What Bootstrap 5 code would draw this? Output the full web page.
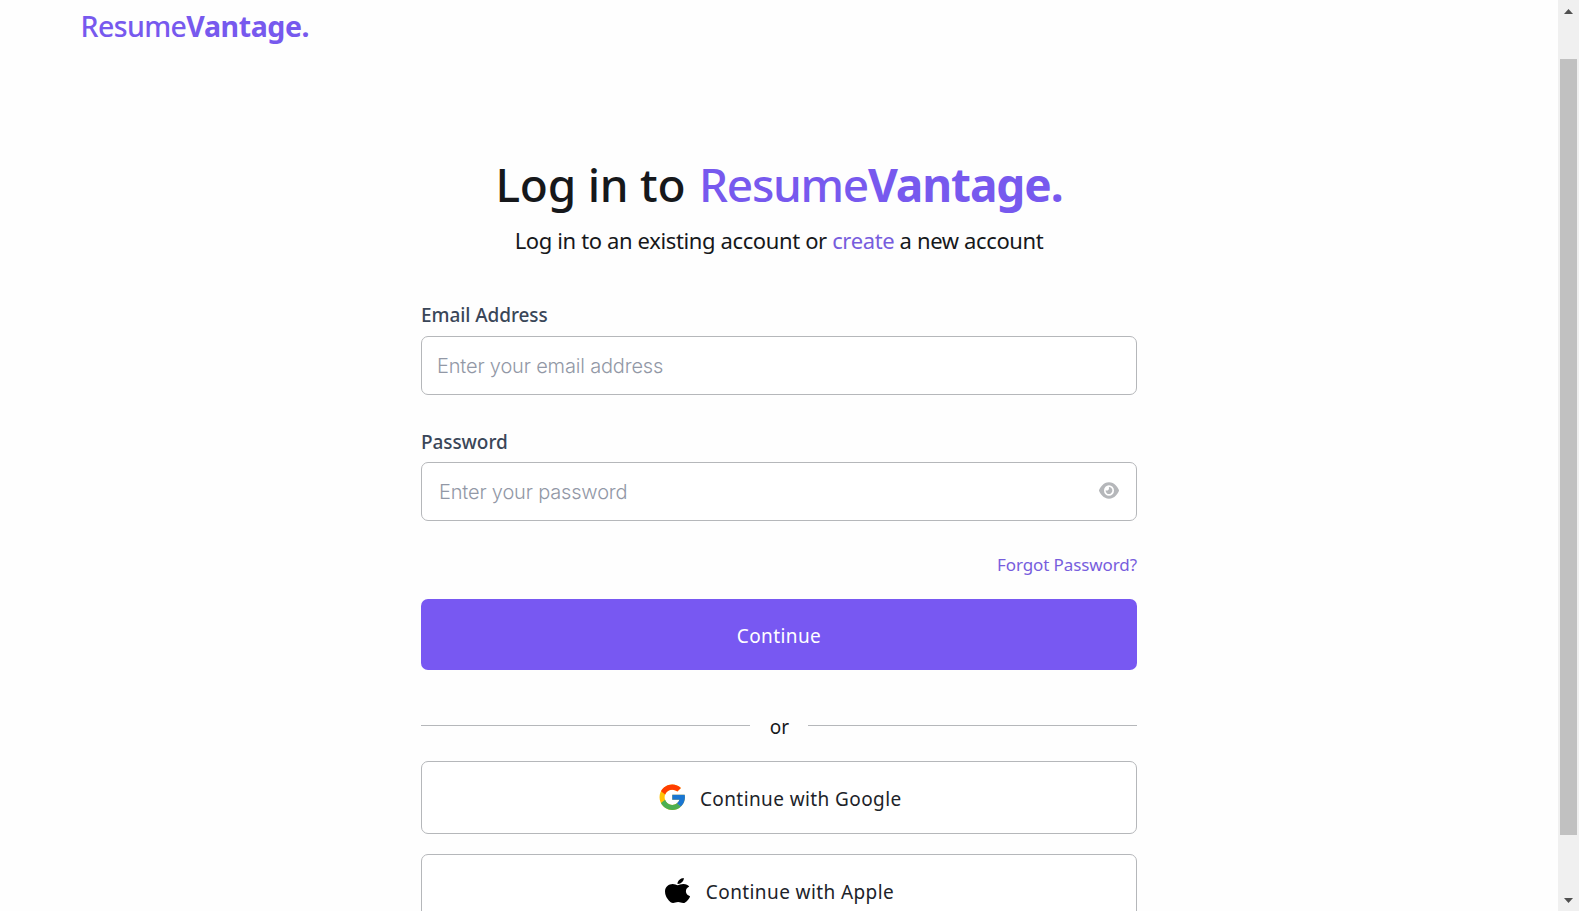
<!DOCTYPE html>
<html lang="en">
<head>
<meta charset="utf-8">
<meta name="viewport" content="width=device-width, initial-scale=1">
<title>ResumeVantage - Log in</title>
<link href="https://cdn.jsdelivr.net/npm/bootstrap@5.3.0/dist/css/bootstrap.min.css" rel="stylesheet">
<style>
  :root { --brand: #7858f2; --line: #b5b7ba; }
  body { font-family: "Noto Sans", sans-serif; color: #16181b; background: #fefefe; }
  a { color: #775ddd; text-decoration: none; }
  .page { height: 911px; }
  .brand-name { color: #7759ee; }
  .site-logo { padding: 5px 0 0 80.5px; height: 60px; font-size: 28.5px; line-height: 42px; letter-spacing: -.4px; }
  .login { width: 716px; }
  .login-title { margin: 91px 0 0; font-size: 46px; line-height: 66px; font-weight: 500; letter-spacing: -.25px; white-space: nowrap; }
  .login-title .brand-name { letter-spacing: -1.1px; margin-left: 2px; }
  .brand-light { font-weight: 500; }
  .login-title .brand-light { letter-spacing: -1.3px; }
  .site-logo .brand-light { letter-spacing: -.6px; }
  .login-sub { font-size: 22px; line-height: 32px; letter-spacing: -.37px; margin: 7px 0 0; }
  .field-label { font-size: 19px; line-height: 28px; font-weight: 500; letter-spacing: -.08px; color: #3a4658; margin: 0; }
  .field { height: 59px; border: 1px solid var(--line); border-radius: 7px; font-family: Inter, sans-serif; font-size: 20px; font-weight: 300; letter-spacing: -.17px; background: #fff; padding: 0 15px; }
  .field::placeholder { color: #9298a6; opacity: 1; }
  .field-password { padding-left: 17px; }
  .eye { right: 18px; top: 19.5px; line-height: 0; padding: 0; border: 0; background: none; }
  .forgot { font-size: 17px; line-height: 26px; letter-spacing: -.1px; }
  .btn-wide { border-radius: 7px; font-size: 19px; letter-spacing: .4px; line-height: 28px; }
  .btn-main, .btn-main:hover { height: 71px; background: var(--brand); color: #fff; padding: 2px 0 0; }
  .or-row { height: 28px; font-size: 19px; }
  .or-row hr { margin: 0; border-color: var(--line); opacity: 1; }
  .or-row span { width: 58px; line-height: 28px; padding: 4px 0 0 1px; }
  .btn-social { height: 73px; flex: none; border: 1px solid var(--line); background: #fff; padding: 2px 0 0 1px; color: #202329; }
  .track { width: 21px; background: #f0f0f0; }
  .thumb { width: 17px; height: 776px; background: #c1c1c1; margin-top: 45px; }
</style>
</head>
<body class="overflow-hidden">
<div class="page d-flex overflow-hidden">
  <main class="flex-grow-1 overflow-hidden">
    <header class="site-logo brand-name"><span class="brand-light">Resume</span><b>Vantage.</b></header>
    <section class="login mx-auto d-flex flex-column">
      <h1 class="login-title text-center">Log in to <span class="brand-name"><span class="brand-light">Resume</span><b>Vantage.</b></span></h1>
      <p class="login-sub text-center">Log in to an existing account or <a href="#">create</a> a new account</p>
      <form class="d-flex flex-column">
        <label class="field-label" for="email" style="margin-top:45px">Email Address</label>
        <input class="field form-control" id="email" type="email" placeholder="Enter your email address" style="margin-top:7px">
        <label class="field-label" for="password" style="margin-top:33px">Password</label>
        <div class="position-relative" style="margin-top:6px">
          <input class="field field-password form-control" id="password" type="password" placeholder="Enter your password">
          <button class="eye position-absolute" type="button" aria-label="Show password">
            <svg width="20" height="17" viewBox="0 24 576 464" preserveAspectRatio="none" fill="#b5b7ba"><path d="M288 32c-80.8 0-145.5 36.8-192.6 80.6C48.6 156 17.3 208 2.5 243.7c-3.3 7.9-3.3 16.7 0 24.6C17.3 304 48.6 356 95.4 399.4C142.5 443.2 207.2 480 288 480s145.5-36.8 192.6-80.6c46.8-43.5 78.1-95.4 93-131.1c3.3-7.9 3.3-16.7 0-24.6c-14.9-35.7-46.2-87.7-93-131.1C433.5 68.8 368.8 32 288 32zM144 256a144 144 0 1 1 288 0 144 144 0 1 1 -288 0zm144-64c0 35.3-28.7 64-64 64c-7.1 0-13.9-1.2-20.3-3.3c-5.5-1.8-11.9 1.6-11.7 7.4c.3 6.9 1.3 13.8 3.2 20.7c13.7 51.2 66.4 81.6 117.6 67.9s81.6-66.4 67.9-117.6c-11.1-41.5-47.8-69.4-88.6-71.1c-5.8-.2-9.2 6.1-7.4 11.7c2.1 6.4 3.3 13.2 3.3 20.3z"/></svg>
          </button>
        </div>
        <a class="forgot align-self-end" href="#" style="margin-top:31px">Forgot Password?</a>
        <button class="btn btn-wide btn-main" type="button" style="margin-top:21px">Continue</button>
      </form>
      <div class="or-row d-flex align-items-center" style="margin-top:41px">
        <hr class="flex-fill"><span class="text-center">or</span><hr class="flex-fill">
      </div>
      <button class="btn btn-wide btn-social d-flex align-items-center justify-content-center" type="button" style="margin-top:22px">
        <svg width="30.5" height="30.5" viewBox="0 0 48 48" style="margin:-3px 12px 0 0"><path fill="#FFC107" d="M43.611 20.083H42V20H24v8h11.303c-1.649 4.657-6.08 8-11.303 8-6.627 0-12-5.373-12-12s5.373-12 12-12c3.059 0 5.842 1.154 7.961 3.039l5.657-5.657C34.046 6.053 29.268 4 24 4 12.955 4 4 12.955 4 24s8.955 20 20 20 20-8.955 20-20c0-1.341-.138-2.65-.389-3.917z"/><path fill="#FF3D00" d="M6.306 14.691l6.571 4.819C14.655 15.108 18.961 12 24 12c3.059 0 5.842 1.154 7.961 3.039l5.657-5.657C34.046 6.053 29.268 4 24 4 16.318 4 9.656 8.337 6.306 14.691z"/><path fill="#4CAF50" d="M24 44c5.166 0 9.86-1.977 13.409-5.192l-6.19-5.238C29.211 35.091 26.715 36 24 36c-5.202 0-9.619-3.317-11.283-7.946l-6.522 5.025C9.505 39.556 16.227 44 24 44z"/><path fill="#1976D2" d="M43.611 20.083H42V20H24v8h11.303c-.792 2.237-2.231 4.166-4.087 5.571l6.19 5.238C36.971 39.205 44 34 44 24c0-1.341-.138-2.65-.389-3.917z"/></svg>
        <span>Continue with Google</span>
      </button>
      <button class="btn btn-wide btn-social d-flex align-items-center justify-content-center" type="button" style="margin-top:20px">
        <svg width="25" height="25" viewBox="4 32 376 448" preserveAspectRatio="none" style="margin:-3px 16px 0 0"><path d="M318.7 268.7c-.2-36.7 16.4-64.4 50-84.8-18.8-26.9-47.2-41.7-84.7-44.6-35.5-2.8-74.3 20.7-88.5 20.7-15 0-49.4-19.7-76.4-19.7C63.3 141.2 4 184.8 4 273.5q0 39.3 14.4 81.2c12.8 36.7 59 126.7 107.2 125.2 25.2-.6 43-17.9 75.8-17.9 31.8 0 48.3 17.9 76.4 17.9 48.6-.7 90.4-82.5 102.6-119.3-65.2-30.7-61.7-90-61.7-91.9zm-56.6-164.2c27.3-32.4 24.8-61.9 24-72.5-24.1 1.4-52 16.4-67.9 34.9-17.5 19.8-27.8 44.3-25.6 71.9 26.1 2 49.9-11.4 69.5-34.3z"/></svg>
        <span>Continue with Apple</span>
      </button>
    </section>
  </main>
  <aside class="track d-flex flex-column align-items-center flex-shrink-0" aria-hidden="true">
    <svg width="9" height="5" viewBox="0 0 9 5" style="margin-top:9px" fill="#505050"><path d="M4.5 0L9 5H0z"/></svg>
    <div class="thumb"></div>
    <svg class="mt-auto" width="9" height="5" viewBox="0 0 9 5" style="margin-bottom:8px" fill="#505050"><path d="M4.5 5L9 0H0z"/></svg>
  </aside>
</div>
<script src="https://cdn.jsdelivr.net/npm/bootstrap@5.3.0/dist/js/bootstrap.bundle.min.js"></script>
</body>
</html>
